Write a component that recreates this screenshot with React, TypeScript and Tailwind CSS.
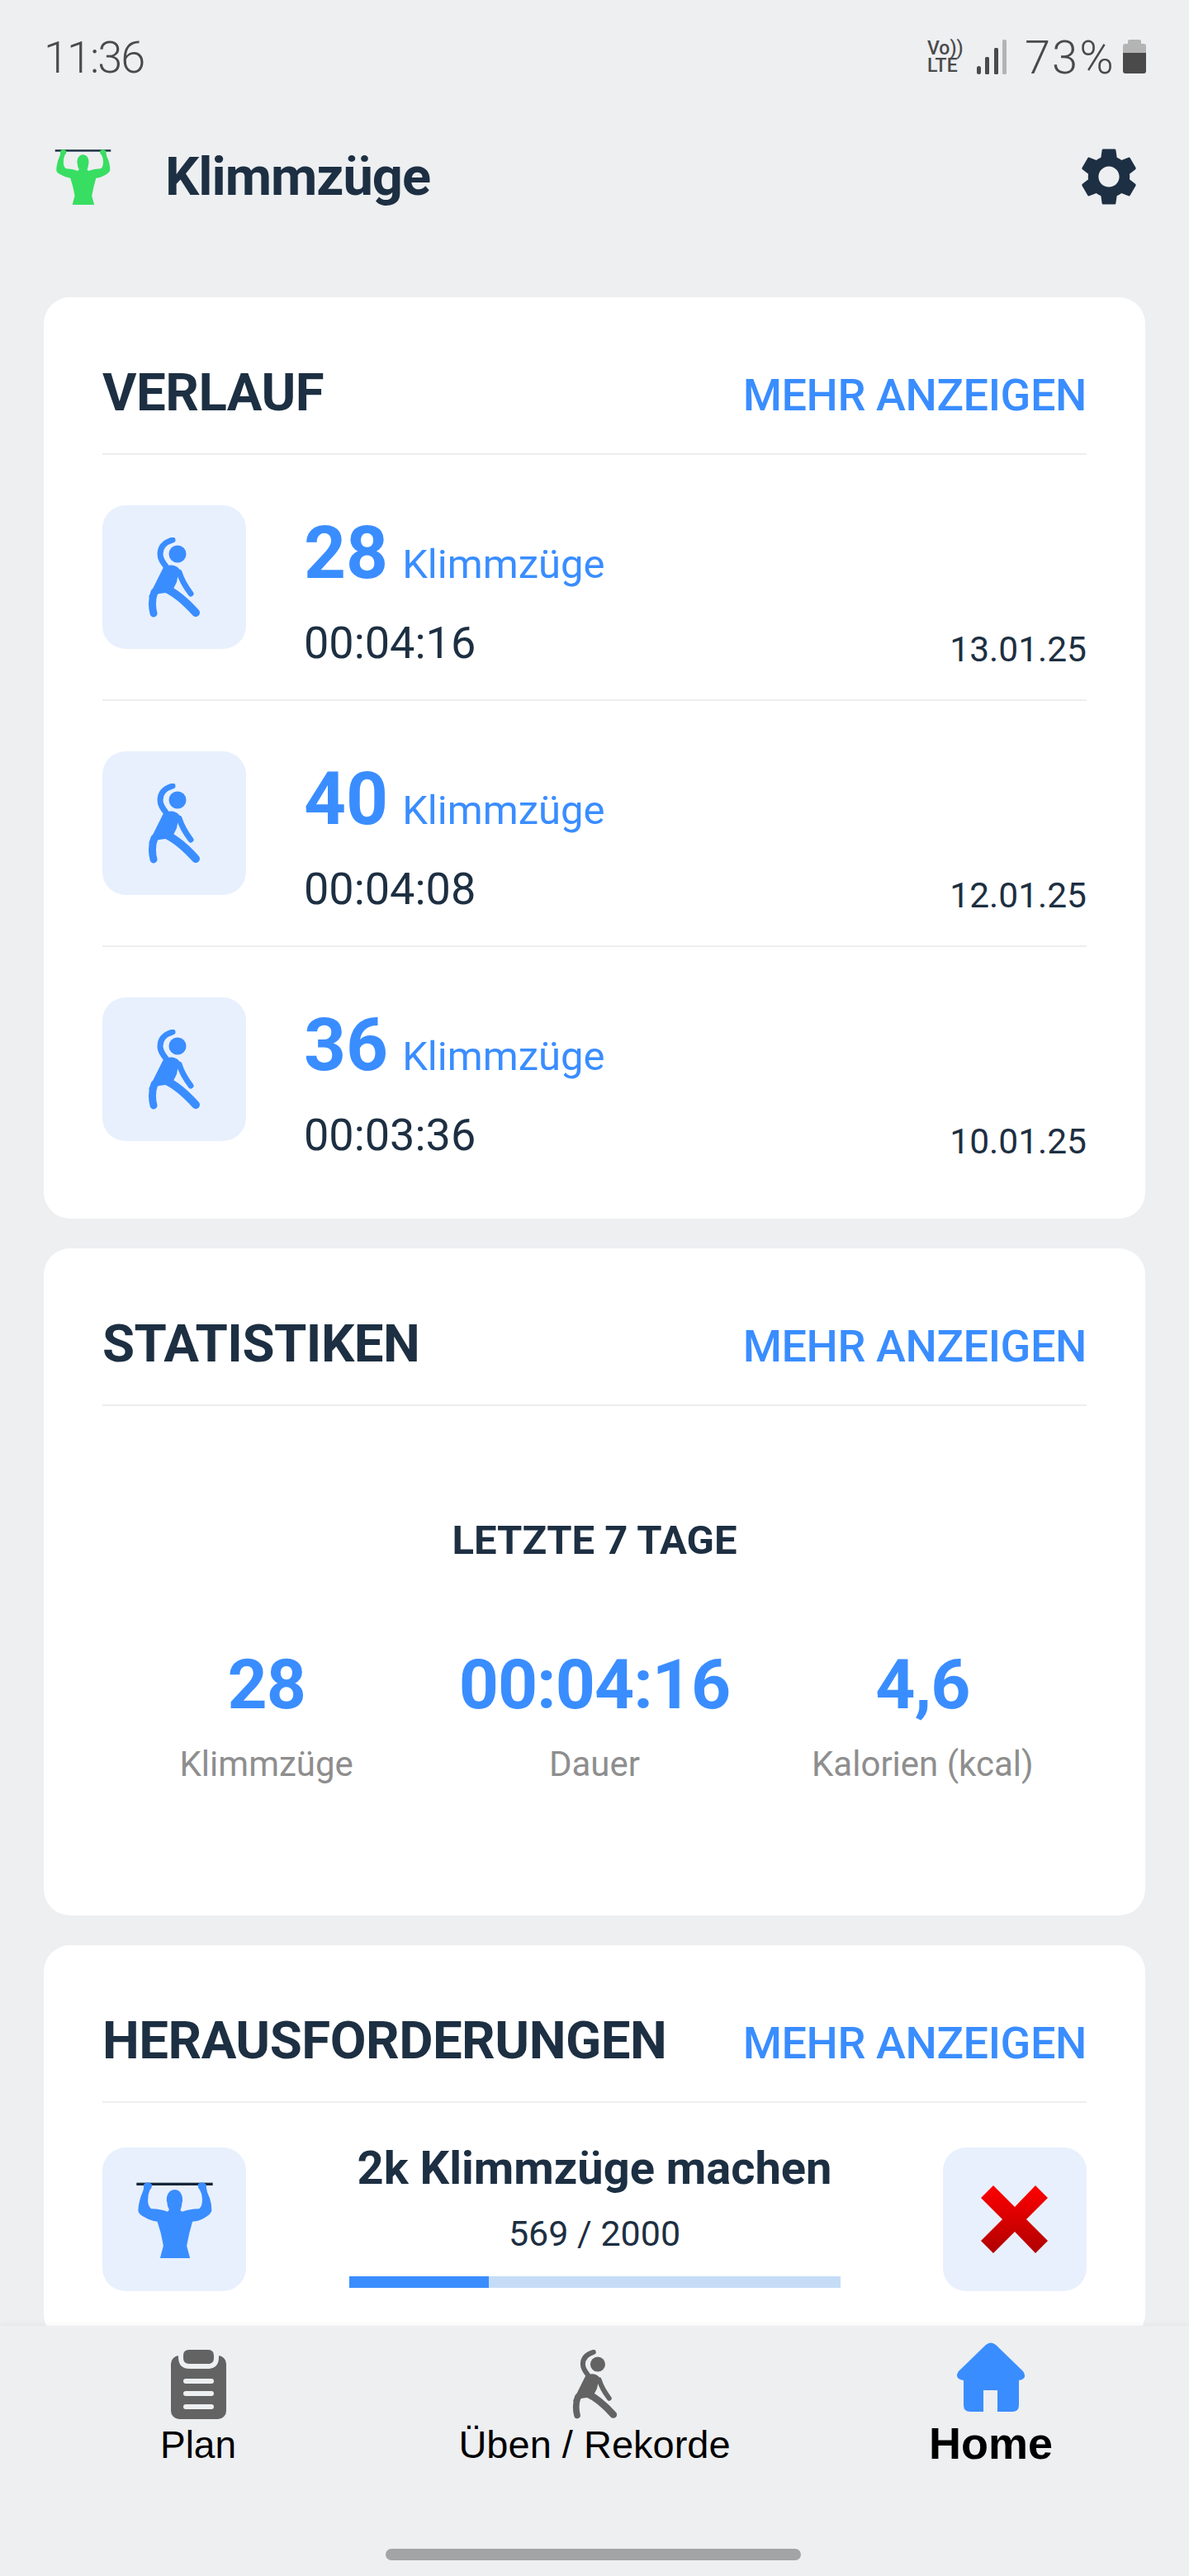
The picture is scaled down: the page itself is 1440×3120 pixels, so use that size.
import React from "react";
import { MdSettings } from "react-icons/md";

const BLUE = "#3a8dff";

// Stretching person, used in the history rows and the bottom bar
const StretchFigure = ({ color, className }: { color: string; className: string }) => (
    <svg viewBox="0 0 64 97" className={className}>
        <circle cx="36" cy="20" r="10.5" fill={color} />
        <path d="M30 3 C20 6 15 12 15 20 C15 26 18 30 22 35" fill="none" stroke={color} strokeWidth="7" strokeLinecap="round" />
        <path d="M19 36 C26 32 34 33 38 38 L35 54 L29 66 L14 68 L1 72 Z" fill={color} />
        <path d="M38 42 C41 52 46 60 52 68" fill="none" stroke={color} strokeWidth="7" strokeLinecap="round" />
        <path d="M22 62 C36 68 48 80 58 91" fill="none" stroke={color} strokeWidth="10" strokeLinecap="round" />
        <path d="M8 66 C5 74 5 84 7 92" fill="none" stroke={color} strokeWidth="9" strokeLinecap="round" />
    </svg>
);

// Man hanging from a bar
const PullUpFigure = ({ color, bar, className }: { color: string; bar: string; className: string }) => (
    <svg viewBox="192 245 278 280" className={className}>
        <rect x="192" y="250" width="278" height="10" fill={bar} />
        <path
            fill={color}
            d="M218 256 Q233 242 248 256 Q250 268 240 278 Q232 296 234 322 Q236 338 246 345 Q275 344 306 356 L311 348 Q303 336 304 322 Q300 320 303 300 Q310 276 330 275 Q352 276 358 298 Q362 320 358 322 Q358 336 352 350 L358 356 Q390 344 420 345 Q430 338 431 322 Q434 296 424 278 Q414 268 416 256 Q430 242 446 256 Q446 270 450 285 Q466 315 466 352 Q462 366 440 378 Q420 390 396 392 Q384 432 375 480 L387 525 L278 525 L290 480 Q282 432 268 392 Q240 388 222 376 Q200 366 198 352 Q200 315 214 285 Q220 270 218 256 Z"
        />
    </svg>
);

const ClipboardIcon = () => (
    <svg viewBox="0 0 67 84" className="w-[67px] h-[84px]">
        <rect x="0" y="7" width="67" height="77" rx="10" fill="#636363" />
        <path d="M9 7 L9 9 Q9 23 23 23 L44 23 Q58 23 58 9 L58 7 Z" fill="#edeff1" />
        <path d="M22 0 L45 0 Q52 0 52 7 L52 10 Q52 17 45 17 L22 17 Q15 17 15 10 L15 7 Q15 0 22 0 Z" fill="#636363" />
        <rect x="15" y="35" width="37" height="6" rx="3" fill="#edeff1" />
        <rect x="15" y="50" width="37" height="6" rx="3" fill="#edeff1" />
        <rect x="15" y="66" width="37" height="6" rx="3" fill="#edeff1" />
    </svg>
);

const HomeIcon = () => (
    <svg viewBox="0 0 84 84" className="w-[84px] h-[84px]">
        <path
            fill={BLUE}
            d="M36 3 Q42 -2 48 3 L81 35 Q87 44 76 46 L76 76 Q76 84 68 84 L50 84 L50 58 L33 58 L33 84 L17 84 Q9 84 9 76 L9 46 Q-3 44 3 35 Z"
        />
    </svg>
);

const SectionHeader = ({ title }: { title: string }) => (
    <div className="flex h-[191px] items-center justify-between border-b-2 border-[#eceef0] pt-[42px]">
        <h2 className="text-[63.5px] leading-none font-bold tracking-[-0.5px] text-[#1d2f42]">{title}</h2>
        <a className="mt-[6px] text-[54px] leading-none font-medium tracking-[-0.4px] text-[#3a8dff]">MEHR ANZEIGEN</a>
    </div>
);

const history = [
    { count: "28", time: "00:04:16", date: "13.01.25" },
    { count: "40", time: "00:04:08", date: "12.01.25" },
    { count: "36", time: "00:03:36", date: "10.01.25" },
];

const stats = [
    { value: "28", label: "Klimmzüge" },
    { value: "00:04:16", label: "Dauer" },
    { value: "4,6", label: "Kalorien (kcal)" },
];

export default function App() {
    return (
        <div className="flex h-[3120px] w-[1440px] flex-col overflow-hidden bg-[#edeff1] font-['Roboto',sans-serif]">
            <div className="flex-1 overflow-hidden">
                {/* Status bar */}
                <div className="flex h-[140px] items-start justify-between pl-[53px] pr-[52px] pt-[40px] text-[#4a4a4a]">
                    <span className="text-[54px] leading-[60px] font-light tracking-[-2px]">11:36</span>
                    <div className="flex items-start">
                        <div className="mt-[8px] flex w-[42px] flex-col font-medium">
                            <span className="text-[23px] leading-[21px]">Vo))</span>
                            <span className="text-[23px] leading-[21px]">LTE</span>
                        </div>
                        <svg viewBox="0 0 36 42" className="ml-[18px] mt-[8px] h-[42px] w-[36px]">
                            <rect x="0" y="32" width="5" height="10" rx="2.5" fill="#4a4a4a" />
                            <rect x="10" y="21" width="5" height="21" rx="1.5" fill="#4a4a4a" />
                            <rect x="21" y="10" width="5" height="32" rx="1.5" fill="#4a4a4a" />
                            <rect x="31" y="0" width="5" height="42" rx="1.5" fill="#b4b4b4" />
                        </svg>
                        <span className="ml-[22px] w-[109px] text-[56px] leading-[60px] font-light tracking-[2px]">73%</span>
                        <svg viewBox="0 0 28 41" className="ml-[10px] mt-[8px] h-[41px] w-[28px]">
                            <path d="M8 0 L20 0 Q22 0 22 2 L22 5 L25 5 Q28 5 28 8 L28 16 L0 16 L0 8 Q0 5 3 5 L6 5 L6 2 Q6 0 8 0 Z" fill="#b4b4b4" />
                            <path d="M0 16 L28 16 L28 38 Q28 41 25 41 L3 41 Q0 41 0 38 Z" fill="#4a4a4a" />
                        </svg>
                    </div>
                </div>

                {/* App header */}
                <div className="flex h-[148px] items-center pl-[66px] pr-[55px]">
                    <PullUpFigure color="#38de62" bar="#1d2f42" className="h-[68px] w-[69px]" />
                    <h1 className="ml-[65px] flex-1 text-[65px] leading-none font-bold tracking-[-1px] text-[#1d2f42]">Klimmzüge</h1>
                    <MdSettings size={84} color="#1d2f42" />
                </div>

                <div className="mt-[72px] flex flex-col gap-[36px] px-[53px]">
                    {/* Verlauf */}
                    <section className="h-[1116px] rounded-[32px] bg-white px-[71px]">
                        <SectionHeader title="VERLAUF" />
                        {history.map((item, i) => (
                            <div key={item.date} className={`flex h-[298px] pt-[61px] ${i < 2 ? "border-b-2 border-[#eceef0]" : ""}`}>
                                <div className="flex h-[174px] w-[174px] items-center justify-center rounded-[28px] bg-[#e8f0fd]">
                                    <StretchFigure color={BLUE} className="h-[97px] w-[64px]" />
                                </div>
                                <div className="ml-[70px] flex-1 pt-[13px]">
                                    <div className="flex items-baseline gap-[17px] text-[#3a8dff]">
                                        <span className="text-[89px] leading-[90px] font-bold">{item.count}</span>
                                        <span className="text-[49px] leading-[60px]">Klimmzüge</span>
                                    </div>
                                    <div className="mt-[34px] flex items-start justify-between text-[#1d2f42]">
                                        <span className="text-[54px] leading-[60px]">{item.time}</span>
                                        <span className="mt-[8px] text-[42.5px] leading-[60px]">{item.date}</span>
                                    </div>
                                </div>
                            </div>
                        ))}
                    </section>

                    {/* Statistiken */}
                    <section className="h-[808px] rounded-[32px] bg-white px-[71px]">
                        <SectionHeader title="STATISTIKEN" />
                        <p className="mt-[133px] text-center text-[49px] leading-[60px] font-bold text-[#1d2f42]">LETZTE 7 TAGE</p>
                        <div className="mt-[100px] grid grid-cols-3 text-center">
                            {stats.map((s) => (
                                <div key={s.label}>
                                    <div className="text-[84px] leading-[90px] font-bold tracking-[-1px] text-[#3a8dff]">{s.value}</div>
                                    <div className="mt-[26px] text-[42px] leading-[50px] text-[#8e8e8e]">{s.label}</div>
                                </div>
                            ))}
                        </div>
                    </section>

                    {/* Herausforderungen */}
                    <section className="rounded-[32px] bg-white px-[71px] pb-[60px]">
                        <SectionHeader title="HERAUSFORDERUNGEN" />
                        <div className="flex items-start justify-between pt-[49px]">
                            <div className="mt-[5px] flex h-[174px] w-[174px] items-center justify-center rounded-[28px] bg-[#e8f0fd]">
                                <PullUpFigure color={BLUE} bar="#14263a" className="h-[93px] w-[93px]" />
                            </div>
                            <div className="flex w-[595px] flex-col items-center">
                                <p className="text-[56px] leading-[60px] font-bold text-[#1d2f42] whitespace-nowrap">2k Klimmzüge machen</p>
                                <p className="mt-[24px] text-[43px] leading-[50px] text-[#1d2f42]">569 / 2000</p>
                                <div className="mt-[27px] h-[14px] w-full bg-[#c5dcf7]">
                                    <div className="h-full bg-[#3a8dff]" style={{ width: `${(569 / 2000) * 100}%` }} />
                                </div>
                            </div>
                            <div className="mt-[5px] flex h-[174px] w-[174px] items-center justify-center rounded-[28px] bg-[#e8f0fd]">
                                <svg viewBox="0 0 82 82" className="h-[82px] w-[82px]">
                                    <defs>
                                        <linearGradient id="cross" x1="0" y1="0" x2="0" y2="1">
                                            <stop offset="0" stopColor="#ff0000" />
                                            <stop offset="1" stopColor="#b00000" />
                                        </linearGradient>
                                    </defs>
                                    <path fill="url(#cross)" d="M15 0 L41 26 L66 0 L81 15 L55 41 L81 67 L66 82 L41 56 L15 82 L0 67 L26 41 L0 15 Z" />
                                </svg>
                            </div>
                        </div>
                    </section>
                </div>
            </div>

            {/* Bottom nav */}
            <nav className="relative h-[303px] shrink-0 bg-[#edeff1] font-['Liberation_Sans',sans-serif] text-black shadow-[0_-2px_6px_rgba(0,0,0,0.04)]">
                <div className="grid grid-cols-3">
                    <div className="flex flex-col items-center pt-[29px]">
                        <ClipboardIcon />
                        <span className="mt-[1px] text-[46px] leading-[60px]">Plan</span>
                    </div>
                    <div className="flex flex-col items-center pt-[29px]">
                        <StretchFigure color="#636363" className="h-[84px] w-[55px]" />
                        <span className="mt-[1px] text-[47px] leading-[60px]">Üben / Rekorde</span>
                    </div>
                    <div className="flex flex-col items-center pt-[20px]">
                        <HomeIcon />
                        <span className="mt-[6px] text-[54px] leading-[64px] font-bold">Home</span>
                    </div>
                </div>
                <div className="absolute bottom-[19px] left-[467px] h-[14px] w-[503px] rounded-full bg-[#a3a4a6]" />
            </nav>
        </div>
    );
}
